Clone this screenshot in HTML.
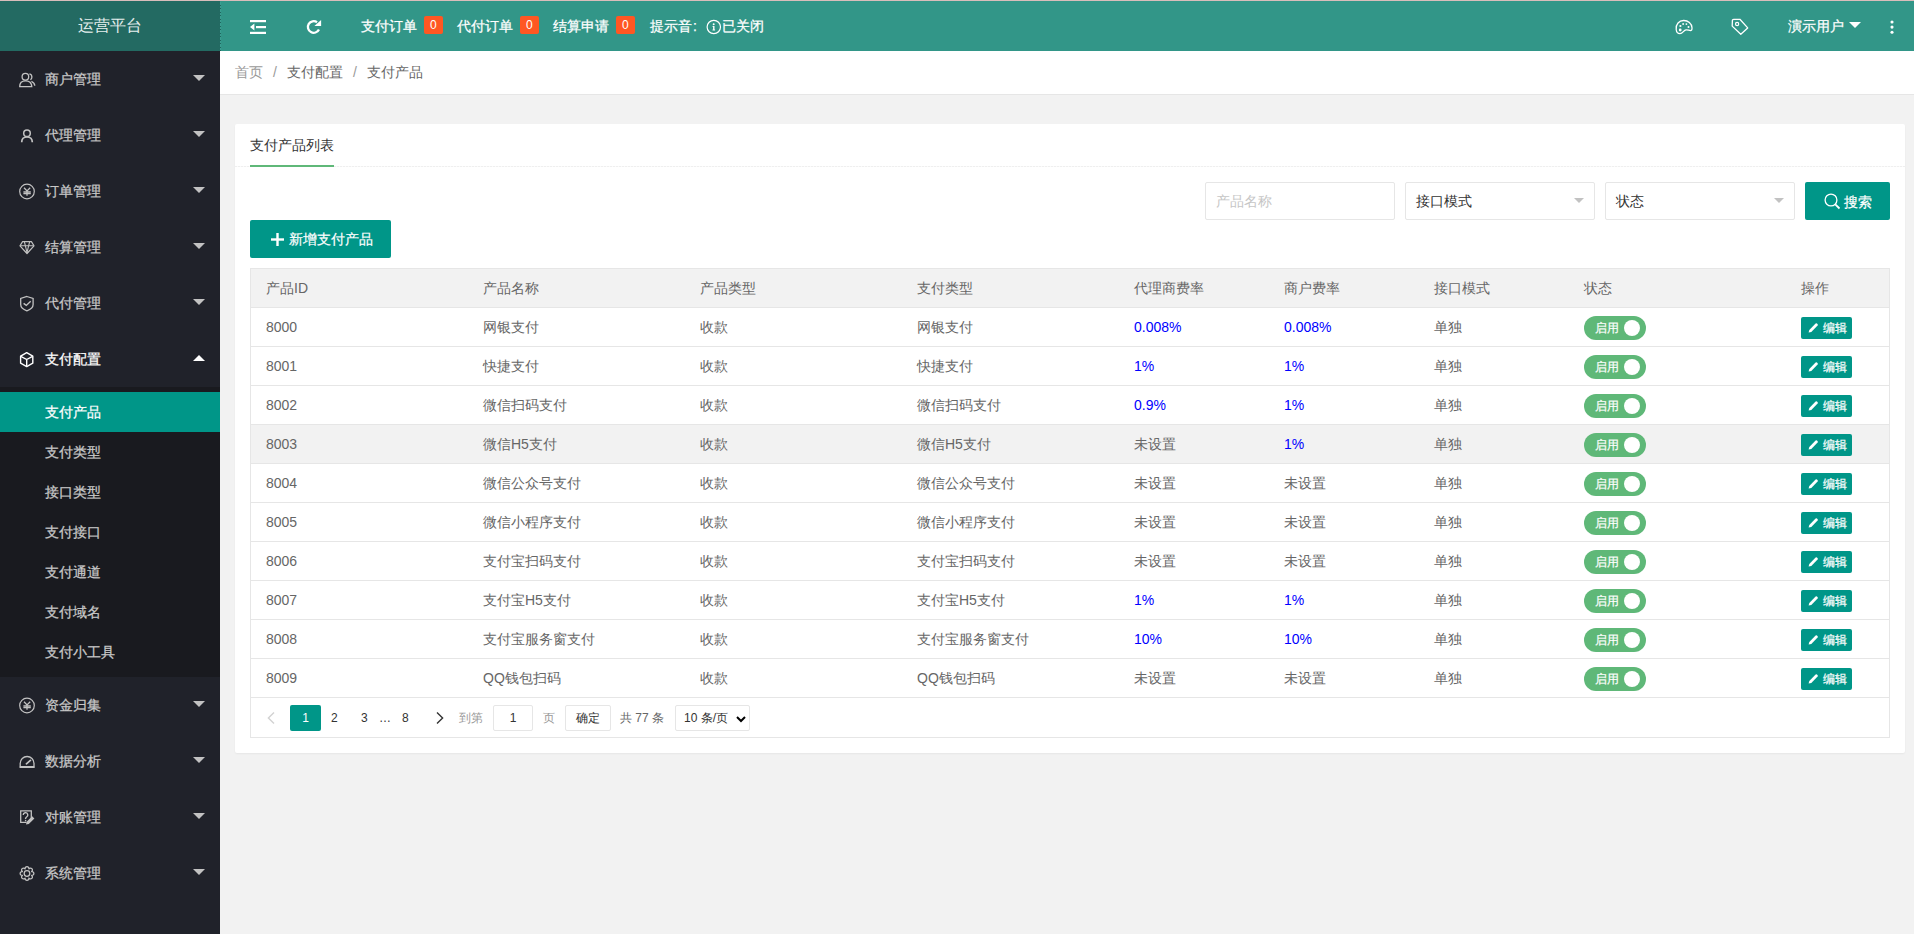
<!DOCTYPE html><html><head><meta charset="utf-8"><style>
*{margin:0;padding:0;box-sizing:border-box}
html,body{width:1914px;height:934px;overflow:hidden}
body{font-family:"Liberation Sans",sans-serif;font-size:14px;color:#666;background:#f2f2f2;position:relative}
.abs{position:absolute}
#topline{left:0;top:0;width:1914px;height:1px;background:#d9bdbb}
#logo{left:0;top:1px;width:220px;height:50px;background:#236a62;color:#e6efee;font-size:16px;line-height:50px;text-align:center}
#header{left:220px;top:1px;width:1694px;height:50px;background:#329688;color:#fff}
#sep{left:220px;top:2px;width:1px;height:49px;background:repeating-linear-gradient(180deg,#3a9f92 0 2.5px,#20675f 2.5px 3.5px)}
#header .ht{position:absolute;top:0;line-height:50px;font-size:14px;color:#fff;-webkit-text-stroke:.25px #fff}
#header .bd{position:absolute;top:15px;height:18px;line-height:18px;padding:0 6px;background:#ff5722;color:#fff;font-size:12px;border-radius:2px}
#side{left:0;top:51px;width:220px;height:883px;background:#20222a}
.nav{position:absolute;left:0;width:220px;height:56px;color:#c8c8c8}
.nav .t{position:absolute;left:45px;top:0;line-height:56px;font-size:14px;-webkit-text-stroke:.25px currentColor}
.nav svg{position:absolute;left:17px;top:18px}
.nav .arr{position:absolute;left:193px;top:24px;width:0;height:0;border-left:6px solid transparent;border-right:6px solid transparent;border-top:6px solid #c2c2c2}
.nav.open .arr{border-top:0;border-bottom:6px solid #fff;top:24px}
.nav.open{color:#fff}
#sub{left:0;top:387px;width:220px;height:290px;background:#191a1f}
.si{position:absolute;left:0;width:220px;height:40px;line-height:40px;padding-left:45px;color:#c8c8c8;-webkit-text-stroke:.25px currentColor}
.si.act{background:#009688;color:#fff}
#crumb{left:220px;top:51px;width:1694px;height:44px;background:#fff;border-bottom:1px solid #e6e6e6;line-height:42px;padding-left:15px;color:#999}
#crumb .sep{color:#999;margin:0 10px}
#crumb .c{color:#666}
#card{left:235px;top:124px;width:1670px;height:629px;background:#fff;border-radius:2px;box-shadow:0 1px 2px 0 rgba(0,0,0,.05)}
#tabt{left:250px;top:124px;line-height:42px;color:#333}
#tabline{left:235px;top:166px;width:1670px;height:1px;background:repeating-linear-gradient(90deg,#efefef 0 2px,#fafafa 2px 3px)}
#tabul{left:250px;top:165px;width:84px;height:2px;background:#5fb878}
.inp{position:absolute;top:182px;width:190px;height:38px;border:1px solid #e6e6e6;background:#fff;border-radius:2px;line-height:36px;padding-left:10px;color:#333}
.inp .tri{position:absolute;right:9.6px;top:15px;width:0;height:0;border-left:5.7px solid transparent;border-right:5.7px solid transparent;border-top:5.7px solid #c2c2c2}
#sbtn{left:1805px;top:182px;width:85px;height:38px;background:#009688;color:#fff;border-radius:2px;line-height:38px}
#abtn{left:250px;top:220px;width:141px;height:38px;background:#009688;color:#fff;border-radius:2px;line-height:38px}
#tbl{left:250px;top:268px;width:1640px;height:470px;border:1px solid #e6e6e6}
.tr{position:absolute;left:0;width:1638px;height:39px;border-bottom:1px solid #e6e6e6}
.tr.h{background:#f2f2f2}
.td{position:absolute;top:0;line-height:38px;color:#666}
.blue{color:#0000ff}
.sw{position:absolute;top:8px;width:62px;height:24px;border-radius:20px;background:#5fb878;color:#fff;font-size:12px;line-height:24px;padding-left:11px;-webkit-text-stroke:.2px #fff}
.sw i{position:absolute;right:6px;top:4px;width:16px;height:16px;border-radius:50%;background:#fff}
.eb{position:absolute;top:9px;width:51px;height:22px;background:#009688;color:#fff;font-size:12px;line-height:22px;border-radius:2px}
.pgt{position:absolute;top:705px;line-height:26px;font-size:12px;color:#333}
</style></head><body>
<div id="topline" class="abs"></div>
<div id="logo" class="abs">运营平台</div>
<div id="header" class="abs">
<svg class="abs" style="left:30px;top:19px" width="16" height="14" viewBox="0 0 16 14"><g fill="#fff"><rect x="0" y="0" width="16" height="2.2"/><rect x="6" y="6" width="10" height="2.2"/><path d="M0 7.1L4.4 3.6v7z"/><rect x="0" y="11.8" width="16" height="2.2"/></g></svg>
<svg class="abs" style="left:85px;top:18px" width="18" height="16" viewBox="0 0 18 16"><path d="M13.96 10.45A5.8 5.8 0 1 1 12.03 3.25" fill="none" stroke="#fff" stroke-width="2.3"/><path d="M16.1 1.1V7.1H9.4z" fill="#fff"/></svg>
<span class="ht" style="left:141px">支付订单</span><span class="bd" style="left:204px">0</span>
<span class="ht" style="left:237px">代付订单</span><span class="bd" style="left:300px">0</span>
<span class="ht" style="left:333px">结算申请</span><span class="bd" style="left:396px">0</span>
<span class="ht" style="left:430px">提示音</span><span class="ht" style="left:473px">:</span>
<svg class="abs" style="left:486px;top:18px" width="16" height="16" viewBox="0 0 16 16"><circle cx="7.8" cy="8" r="6.7" fill="none" stroke="#fff" stroke-width="1.2"/><circle cx="7.7" cy="5.2" r="1" fill="#fff"/><path d="M6.6 7h1.9v3.6h.6v1h-2.6v-1h.6V8h-.5z" fill="#fff"/></svg>
<span class="ht" style="left:502px">已关闭</span>
<svg class="abs" style="left:1454px;top:17px" width="20" height="18" viewBox="0 0 20 18"><path d="M2.2 11.5C1.6 6 5.2 2.6 9.6 2.5 14 2.4 17.8 5.5 18 9.8c.1 1.8-.4 2.8-1.6 2.8-1.4 0-2.6-1-4.4-.8-2.4.4-3.2 3.8-6 3.8-2 0-3.6-1.8-3.8-4.1z" fill="none" stroke="#fff" stroke-width="1.3"/><circle cx="6.4" cy="8" r="1.1" fill="#fff"/><circle cx="9.1" cy="6" r=".9" fill="#fff"/><circle cx="12.4" cy="6.1" r=".9" fill="#fff"/><circle cx="14.5" cy="9" r="1" fill="#fff"/><circle cx="6.2" cy="12" r="1.4" fill="#fff"/></svg>
<svg class="abs" style="left:1510px;top:16px" width="20" height="20" viewBox="0 0 20 20"><path d="M2.4 3.6Q2.4 2.3 3.7 2.3H9.9L17.7 10.9 10.8 17.3 2.2 9.1Z" fill="none" stroke="#fff" stroke-width="1.3" stroke-linejoin="round"/><circle cx="7.1" cy="7" r="1.6" fill="none" stroke="#fff" stroke-width="1.2"/></svg>
<span class="ht" style="left:1568px">演示用户</span>
<span class="abs" style="left:1629px;top:21px;width:0;height:0;border-left:6px solid transparent;border-right:6px solid transparent;border-top:6px solid #fff"></span>
<svg class="abs" style="left:1670px;top:19px" width="4" height="14" viewBox="0 0 4 14"><circle cx="2" cy="2" r="1.55" fill="#fff"/><circle cx="2" cy="7.1" r="1.55" fill="#fff"/><circle cx="2" cy="12.2" r="1.55" fill="#fff"/></svg>
</div>
<div id="sep" class="abs"></div>
<div id="side" class="abs"></div>
<div class="nav" style="top:51px"><svg width="20" height="20" viewBox="0 0 20 20"><g fill="none" stroke="#c2c2c2" stroke-width="1.3"><ellipse cx="8.4" cy="7.8" rx="3.3" ry="3.4"/><path d="M2.7 17.6C2.7 13.8 5 11.8 8.5 11.8S14.6 13.8 14.8 17.6z"/><path d="M12.4 4.9c1.6.4 2.5 1.7 2.5 3.1 0 1.3-.6 2.3-1.5 2.8M14.4 12.4c1.8.8 3.2 2.2 3.4 4.4"/></g></svg><span class="t">商户管理</span><span class="arr"></span></div>
<div class="nav" style="top:107px"><svg width="20" height="20" viewBox="0 0 20 20"><g fill="none" stroke="#c2c2c2"><circle cx="10" cy="8.2" r="3.3" stroke-width="1.5"/><path d="M4.7 17.2C4.7 14 6.9 12 10 12s5.3 2 5.3 5.2" stroke-width="1.7"/></g></svg><span class="t">代理管理</span><span class="arr"></span></div>
<div class="nav" style="top:163px"><svg width="20" height="20" viewBox="0 0 20 20"><g fill="none" stroke="#c2c2c2" stroke-width="1.3"><circle cx="10" cy="10.5" r="7.3" stroke-width="1.2"/><path d="M7 6.7l3 3.2 3.2-3.2M10 9.9v4.8M6.4 10.9h7.4M6.4 12.5h7.4"/></g></svg><span class="t">订单管理</span><span class="arr"></span></div>
<div class="nav" style="top:219px"><svg width="20" height="20" viewBox="0 0 20 20"><g fill="none" stroke="#c2c2c2" stroke-width="1.2" stroke-linejoin="round"><path d="M5.6 4.6h8.8l2.6 4.2-7 7.7-7-7.7z"/><path d="M3.2 8.8h13.6M7.4 4.8l1 4 1.6 6.8 1.6-6.8 1-4" stroke-width="1.1"/></g></svg><span class="t">结算管理</span><span class="arr"></span></div>
<div class="nav" style="top:275px"><svg width="20" height="20" viewBox="0 0 20 20"><g fill="none" stroke="#c2c2c2" stroke-width="1.3"><path d="M9.9 3.5l6.2 1.9v6.2c0 3-3 5.2-6.2 6.2-3.2-1-6.2-3.2-6.2-6.2V5.4z"/><path d="M6.6 10.4l2.7 2 4.4-4.2" stroke-width="1.4"/></g></svg><span class="t">代付管理</span><span class="arr"></span></div>
<div class="nav open" style="top:331px"><svg width="20" height="20" viewBox="0 0 20 20"><g fill="none" stroke="#fff" stroke-width="1.4" stroke-linejoin="round"><path d="M9.7 3.6l6.1 3.6v7L9.7 17.6l-6.1-3.4v-7z"/><path d="M3.8 7.3l5.9 3.2 5.9-3.2M9.7 10.5v6.8"/></g></svg><span class="t">支付配置</span><span class="arr"></span></div>
<div class="nav" style="top:677px"><svg width="20" height="20" viewBox="0 0 20 20"><g fill="none" stroke="#c2c2c2" stroke-width="1.3"><circle cx="10" cy="10.5" r="7.3" stroke-width="1.2"/><path d="M7 6.7l3 3.2 3.2-3.2M10 9.9v4.8M6.4 10.9h7.4M6.4 12.5h7.4"/></g></svg><span class="t">资金归集</span><span class="arr"></span></div>
<div class="nav" style="top:733px"><svg width="20" height="20" viewBox="0 0 20 20"><g fill="none" stroke="#c2c2c2" stroke-width="1.3"><path d="M3.2 15.2V12.4A6.9 6.9 0 0 1 17 12.4V15.2"/><path d="M9.4 12.8l4-3.4" stroke-width="1.7" stroke-linecap="round"/></g><rect x="2.5" y="15" width="15.2" height="2" fill="#c2c2c2"/></svg><span class="t">数据分析</span><span class="arr"></span></div>
<div class="nav" style="top:789px"><svg width="20" height="20" viewBox="0 0 20 20"><g fill="none" stroke="#c2c2c2" stroke-width="1.3"><path d="M9.5 15.4H3.7V3.9h10.6v7.6"/><path d="M6.2 8a2.3 2.3 0 1 1 3.4 2c-.7.4-1 .8-1 1.6v.5" stroke-width="1.4"/></g><circle cx="8.6" cy="13.6" r=".8" fill="#c2c2c2"/><path d="M9 17.6l.6-2.8 5.6-5.6 2.2 2.2-5.6 5.6z" fill="#c2c2c2"/></svg><span class="t">对账管理</span><span class="arr"></span></div>
<div class="nav" style="top:845px"><svg width="20" height="20" viewBox="0 0 20 20"><g fill="none" stroke="#c2c2c2" stroke-width="1.3" stroke-linejoin="round"><circle cx="10" cy="10.5" r="2.8"/><path d="M8.09 5.88 C7.82 2.91 12.18 2.91 11.91 5.88 C13.83 3.59 16.91 6.67 14.62 8.59 C17.59 8.32 17.59 12.68 14.62 12.41 C16.91 14.33 13.83 17.41 11.91 15.12 C12.18 18.09 7.82 18.09 8.09 15.12 C6.17 17.41 3.09 14.33 5.38 12.41 C2.41 12.68 2.41 8.32 5.38 8.59 C3.09 6.67 6.17 3.59 8.09 5.88 Z"/></g></svg><span class="t">系统管理</span><span class="arr"></span></div>
<div id="sub" class="abs"></div>
<div class="si act" style="top:392px">支付产品</div>
<div class="si" style="top:432px">支付类型</div>
<div class="si" style="top:472px">接口类型</div>
<div class="si" style="top:512px">支付接口</div>
<div class="si" style="top:552px">支付通道</div>
<div class="si" style="top:592px">支付域名</div>
<div class="si" style="top:632px">支付小工具</div>
<div id="crumb" class="abs">首页<span class="sep">/</span><span class="c">支付配置</span><span class="sep">/</span><span class="c">支付产品</span></div>
<div id="card" class="abs"></div>
<div id="tabline" class="abs"></div>
<div id="tabt" class="abs">支付产品列表</div>
<div id="tabul" class="abs"></div>
<div class="inp" style="left:1205px;color:#c6c6c6">产品名称</div>
<div class="inp" style="left:1405px">接口模式<span class="tri"></span></div>
<div class="inp" style="left:1605px">状态<span class="tri"></span></div>
<div id="sbtn" class="abs"><svg class="abs" style="left:19px;top:11px" width="17" height="17" viewBox="0 0 17 17"><circle cx="7" cy="7" r="5.9" fill="none" stroke="#fff" stroke-width="1.3"/><path d="M11.3 11.3l4.2 4.2" stroke="#fff" stroke-width="1.8"/></svg><span class="abs" style="left:39px;top:1px;-webkit-text-stroke:.2px #fff">搜索</span></div>
<div id="abtn" class="abs"><svg class="abs" style="left:20.5px;top:13px" width="13" height="13" viewBox="0 0 13 13"><rect x="5.3" y="0" width="2.4" height="13" fill="#fff"/><rect x="0" y="5.3" width="13" height="2.4" fill="#fff"/></svg><span class="abs" style="left:39px;-webkit-text-stroke:.2px #fff">新增支付产品</span></div>
<div id="tbl" class="abs">
<div class="tr h" style="top:0"><span class="td" style="left:15px">产品ID</span><span class="td" style="left:232px">产品名称</span><span class="td" style="left:449px">产品类型</span><span class="td" style="left:666px">支付类型</span><span class="td" style="left:883px">代理商费率</span><span class="td" style="left:1033px">商户费率</span><span class="td" style="left:1183px">接口模式</span><span class="td" style="left:1333px">状态</span><span class="td" style="left:1550px">操作</span></div>
<div class="tr" style="top:39px"><span class="td" style="left:15px">8000</span><span class="td" style="left:232px">网银支付</span><span class="td" style="left:449px">收款</span><span class="td" style="left:666px">网银支付</span><span class="td blue" style="left:883px">0.008%</span><span class="td blue" style="left:1033px">0.008%</span><span class="td" style="left:1183px">单独</span><div class="sw" style="left:1333px">启用<i></i></div><div class="eb" style="left:1550px"><svg class="abs" style="left:7px;top:5px" width="11" height="11" viewBox="0 0 11 11"><path d="M.6 10.5l.7-2.6L7.6 1.6a1 1 0 0 1 1.4 0l.6.6a1 1 0 0 1 0 1.4L3.3 9.9z" fill="#fff"/></svg><span class="abs" style="left:22px;-webkit-text-stroke:.2px #fff">编辑</span></div></div>
<div class="tr" style="top:78px"><span class="td" style="left:15px">8001</span><span class="td" style="left:232px">快捷支付</span><span class="td" style="left:449px">收款</span><span class="td" style="left:666px">快捷支付</span><span class="td blue" style="left:883px">1%</span><span class="td blue" style="left:1033px">1%</span><span class="td" style="left:1183px">单独</span><div class="sw" style="left:1333px">启用<i></i></div><div class="eb" style="left:1550px"><svg class="abs" style="left:7px;top:5px" width="11" height="11" viewBox="0 0 11 11"><path d="M.6 10.5l.7-2.6L7.6 1.6a1 1 0 0 1 1.4 0l.6.6a1 1 0 0 1 0 1.4L3.3 9.9z" fill="#fff"/></svg><span class="abs" style="left:22px;-webkit-text-stroke:.2px #fff">编辑</span></div></div>
<div class="tr" style="top:117px"><span class="td" style="left:15px">8002</span><span class="td" style="left:232px">微信扫码支付</span><span class="td" style="left:449px">收款</span><span class="td" style="left:666px">微信扫码支付</span><span class="td blue" style="left:883px">0.9%</span><span class="td blue" style="left:1033px">1%</span><span class="td" style="left:1183px">单独</span><div class="sw" style="left:1333px">启用<i></i></div><div class="eb" style="left:1550px"><svg class="abs" style="left:7px;top:5px" width="11" height="11" viewBox="0 0 11 11"><path d="M.6 10.5l.7-2.6L7.6 1.6a1 1 0 0 1 1.4 0l.6.6a1 1 0 0 1 0 1.4L3.3 9.9z" fill="#fff"/></svg><span class="abs" style="left:22px;-webkit-text-stroke:.2px #fff">编辑</span></div></div>
<div class="tr" style="top:156px;background:#f2f2f2"><span class="td" style="left:15px">8003</span><span class="td" style="left:232px">微信H5支付</span><span class="td" style="left:449px">收款</span><span class="td" style="left:666px">微信H5支付</span><span class="td" style="left:883px">未设置</span><span class="td blue" style="left:1033px">1%</span><span class="td" style="left:1183px">单独</span><div class="sw" style="left:1333px">启用<i></i></div><div class="eb" style="left:1550px"><svg class="abs" style="left:7px;top:5px" width="11" height="11" viewBox="0 0 11 11"><path d="M.6 10.5l.7-2.6L7.6 1.6a1 1 0 0 1 1.4 0l.6.6a1 1 0 0 1 0 1.4L3.3 9.9z" fill="#fff"/></svg><span class="abs" style="left:22px;-webkit-text-stroke:.2px #fff">编辑</span></div></div>
<div class="tr" style="top:195px"><span class="td" style="left:15px">8004</span><span class="td" style="left:232px">微信公众号支付</span><span class="td" style="left:449px">收款</span><span class="td" style="left:666px">微信公众号支付</span><span class="td" style="left:883px">未设置</span><span class="td" style="left:1033px">未设置</span><span class="td" style="left:1183px">单独</span><div class="sw" style="left:1333px">启用<i></i></div><div class="eb" style="left:1550px"><svg class="abs" style="left:7px;top:5px" width="11" height="11" viewBox="0 0 11 11"><path d="M.6 10.5l.7-2.6L7.6 1.6a1 1 0 0 1 1.4 0l.6.6a1 1 0 0 1 0 1.4L3.3 9.9z" fill="#fff"/></svg><span class="abs" style="left:22px;-webkit-text-stroke:.2px #fff">编辑</span></div></div>
<div class="tr" style="top:234px"><span class="td" style="left:15px">8005</span><span class="td" style="left:232px">微信小程序支付</span><span class="td" style="left:449px">收款</span><span class="td" style="left:666px">微信小程序支付</span><span class="td" style="left:883px">未设置</span><span class="td" style="left:1033px">未设置</span><span class="td" style="left:1183px">单独</span><div class="sw" style="left:1333px">启用<i></i></div><div class="eb" style="left:1550px"><svg class="abs" style="left:7px;top:5px" width="11" height="11" viewBox="0 0 11 11"><path d="M.6 10.5l.7-2.6L7.6 1.6a1 1 0 0 1 1.4 0l.6.6a1 1 0 0 1 0 1.4L3.3 9.9z" fill="#fff"/></svg><span class="abs" style="left:22px;-webkit-text-stroke:.2px #fff">编辑</span></div></div>
<div class="tr" style="top:273px"><span class="td" style="left:15px">8006</span><span class="td" style="left:232px">支付宝扫码支付</span><span class="td" style="left:449px">收款</span><span class="td" style="left:666px">支付宝扫码支付</span><span class="td" style="left:883px">未设置</span><span class="td" style="left:1033px">未设置</span><span class="td" style="left:1183px">单独</span><div class="sw" style="left:1333px">启用<i></i></div><div class="eb" style="left:1550px"><svg class="abs" style="left:7px;top:5px" width="11" height="11" viewBox="0 0 11 11"><path d="M.6 10.5l.7-2.6L7.6 1.6a1 1 0 0 1 1.4 0l.6.6a1 1 0 0 1 0 1.4L3.3 9.9z" fill="#fff"/></svg><span class="abs" style="left:22px;-webkit-text-stroke:.2px #fff">编辑</span></div></div>
<div class="tr" style="top:312px"><span class="td" style="left:15px">8007</span><span class="td" style="left:232px">支付宝H5支付</span><span class="td" style="left:449px">收款</span><span class="td" style="left:666px">支付宝H5支付</span><span class="td blue" style="left:883px">1%</span><span class="td blue" style="left:1033px">1%</span><span class="td" style="left:1183px">单独</span><div class="sw" style="left:1333px">启用<i></i></div><div class="eb" style="left:1550px"><svg class="abs" style="left:7px;top:5px" width="11" height="11" viewBox="0 0 11 11"><path d="M.6 10.5l.7-2.6L7.6 1.6a1 1 0 0 1 1.4 0l.6.6a1 1 0 0 1 0 1.4L3.3 9.9z" fill="#fff"/></svg><span class="abs" style="left:22px;-webkit-text-stroke:.2px #fff">编辑</span></div></div>
<div class="tr" style="top:351px"><span class="td" style="left:15px">8008</span><span class="td" style="left:232px">支付宝服务窗支付</span><span class="td" style="left:449px">收款</span><span class="td" style="left:666px">支付宝服务窗支付</span><span class="td blue" style="left:883px">10%</span><span class="td blue" style="left:1033px">10%</span><span class="td" style="left:1183px">单独</span><div class="sw" style="left:1333px">启用<i></i></div><div class="eb" style="left:1550px"><svg class="abs" style="left:7px;top:5px" width="11" height="11" viewBox="0 0 11 11"><path d="M.6 10.5l.7-2.6L7.6 1.6a1 1 0 0 1 1.4 0l.6.6a1 1 0 0 1 0 1.4L3.3 9.9z" fill="#fff"/></svg><span class="abs" style="left:22px;-webkit-text-stroke:.2px #fff">编辑</span></div></div>
<div class="tr" style="top:390px"><span class="td" style="left:15px">8009</span><span class="td" style="left:232px">QQ钱包扫码</span><span class="td" style="left:449px">收款</span><span class="td" style="left:666px">QQ钱包扫码</span><span class="td" style="left:883px">未设置</span><span class="td" style="left:1033px">未设置</span><span class="td" style="left:1183px">单独</span><div class="sw" style="left:1333px">启用<i></i></div><div class="eb" style="left:1550px"><svg class="abs" style="left:7px;top:5px" width="11" height="11" viewBox="0 0 11 11"><path d="M.6 10.5l.7-2.6L7.6 1.6a1 1 0 0 1 1.4 0l.6.6a1 1 0 0 1 0 1.4L3.3 9.9z" fill="#fff"/></svg><span class="abs" style="left:22px;-webkit-text-stroke:.2px #fff">编辑</span></div></div>
</div>
<svg class="abs" style="left:267px;top:712px" width="8" height="12" viewBox="0 0 8 12"><path d="M7 .6L1.4 6 7 11.4" fill="none" stroke="#d2d2d2" stroke-width="1.4"/></svg>
<div class="abs" style="left:290px;top:705px;width:31px;height:26px;background:#009688;border-radius:2px;color:#fff;font-size:12px;line-height:26px;text-align:center">1</div>
<span class="pgt" style="left:331px">2</span>
<span class="pgt" style="left:361px">3</span>
<span class="pgt" style="left:379px">…</span>
<span class="pgt" style="left:402px">8</span>
<svg class="abs" style="left:436px;top:712px" width="8" height="12" viewBox="0 0 8 12"><path d="M1 .6L6.6 6 1 11.4" fill="none" stroke="#333" stroke-width="1.4"/></svg>
<span class="pgt" style="left:459px;color:#999">到第</span>
<div class="abs" style="left:493px;top:705px;width:40px;height:26px;border:1px solid #e6e6e6;border-radius:2px;color:#333;font-size:12px;line-height:24px;text-align:center">1</div>
<span class="pgt" style="left:543px;color:#999">页</span>
<div class="abs" style="left:565px;top:705px;width:46px;height:26px;border:1px solid #e6e6e6;border-radius:2px;color:#333;font-size:12px;line-height:25px;text-align:center">确定</div>
<span class="pgt" style="left:620px;color:#666">共 77 条</span>
<div class="abs" style="left:675px;top:705px;width:75px;height:26px;border:1px solid #e6e6e6;border-radius:2px;color:#333;font-size:12px;line-height:24px;padding-left:8px">10 条/页<svg class="abs" style="left:60px;top:10px" width="10" height="7" viewBox="0 0 10 7"><path d="M1 1l4 4 4-4" fill="none" stroke="#000" stroke-width="2"/></svg></div>
</body></html>
